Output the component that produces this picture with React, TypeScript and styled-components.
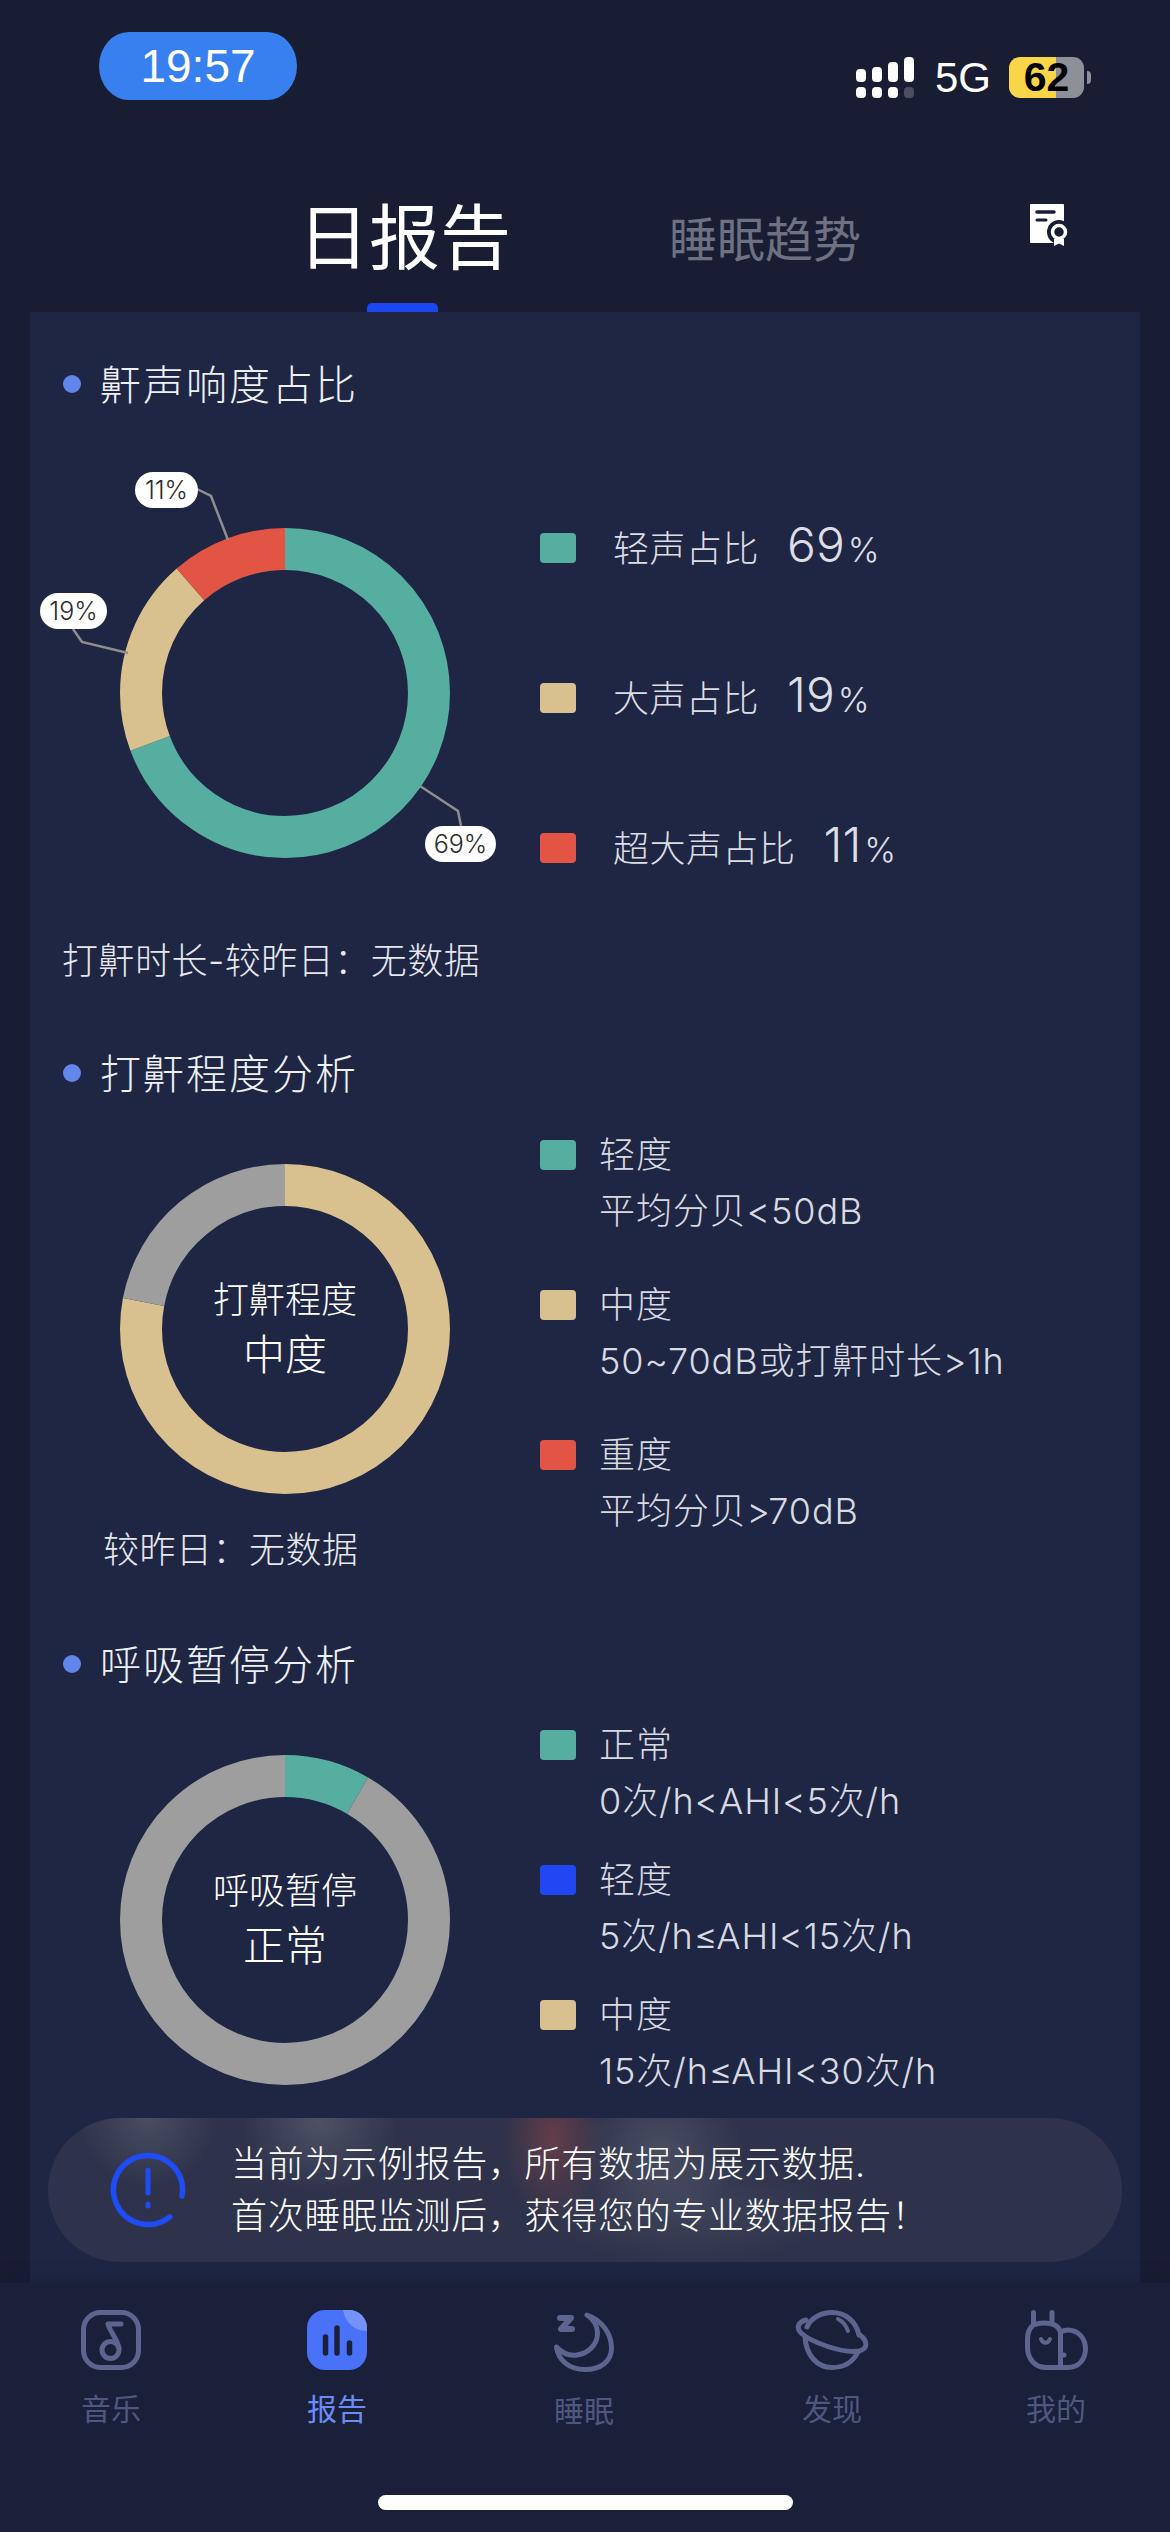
import React from 'react';
import styled, { createGlobalStyle } from 'styled-components';

const TEAL = '#55aea0';
const TAN = '#d8c18f';
const RED = '#e25544';
const GRAY = '#9e9e9e';
const BLUE = '#2147f5';

const GlobalStyle = createGlobalStyle`
  html, body {
    margin: 0;
    padding: 0;
    background: #191d33;
  }
  * {
    box-sizing: border-box;
  }
`;

const Page = styled.div`
  position: relative;
  width: 1170px;
  height: 2532px;
  overflow: hidden;
  display: flex;
  flex-direction: column;
  background: #191d33;
  font-family: Inter, "Noto Sans CJK SC", sans-serif;
  font-weight: 300;
  color: #eef0f5;
`;

const StatusBar = styled.div`
  height: 130px;
  flex: none;
  display: flex;
  justify-content: space-between;
  align-items: flex-start;
  padding: 32px 86px 0 99px;
`;

const TimePill = styled.div`
  width: 198px;
  height: 68px;
  border-radius: 30px / 34px;
  background: #3880ef;
  color: #fff;
  font-family: "Liberation Sans", sans-serif;
  font-weight: 400;
  font-size: 46px;
  line-height: 68px;
  text-align: center;
`;

const StatusRight = styled.div`
  display: flex;
  align-items: center;
  margin-top: 25px;
  height: 41px;
`;

const Signal = styled.div`
  display: flex;
  gap: 6px;
  margin-right: 21px;
`;

const SignalColumn = styled.div`
  width: 10px;
  height: 41px;
  display: flex;
  flex-direction: column;
  justify-content: flex-end;
  gap: 5px;
`;

const SignalDot = styled.div<{ $h: number; $dim?: boolean }>`
  height: ${(p) => p.$h}px;
  border-radius: 4px;
  background: ${(p) => (p.$dim ? '#4a4f60' : '#fff')};
`;

const Network = styled.div`
  font-family: "Liberation Sans", sans-serif;
  font-weight: 400;
  font-size: 42px;
  line-height: 41px;
  color: #fff;
  margin-right: 18px;
`;

const Battery = styled.div`
  position: relative;
  width: 75px;
  height: 41px;
  border-radius: 11px;
  background: linear-gradient(90deg, #f8d648 0 63%, #8e9099 63% 100%);
  color: #000;
  font-family: "Liberation Sans", sans-serif;
  font-weight: 700;
  font-size: 41px;
  line-height: 41px;
  text-align: center;

  &::after {
    content: '';
    position: absolute;
    left: 78px;
    top: 14px;
    width: 4px;
    height: 13px;
    border-radius: 0 6px 6px 0;
    background: #8e9099;
  }
`;

const Header = styled.div`
  height: 182px;
  flex: none;
  display: flex;
  align-items: flex-start;
  padding: 62px 100px 0 298px;
  font-family: "Noto Sans CJK SC", sans-serif;
`;

const ActiveTab = styled.div`
  position: relative;
  width: 213px;
  font-size: 71px;
  line-height: 80px;
  color: #fff;
  font-weight: 400;

  &::after {
    content: '';
    position: absolute;
    left: 69px;
    top: 111px;
    width: 71px;
    height: 9px;
    border-radius: 5px 5px 0 0;
    background: #1c47f0;
  }
`;

const IdleTab = styled.div`
  margin-left: 158px;
  margin-top: 4px;
  font-size: 48px;
  line-height: 80px;
  color: #6e7182;
  font-weight: 400;
`;

const ReportIcon = styled.svg`
  margin-left: auto;
  margin-top: 12px;
`;

const Panel = styled.div`
  flex: 1;
  margin: 0 30px;
  padding: 42px 0 0 32px;
  background: #1f2644;
  overflow: hidden;
`;

const SectionTitle = styled.div<{ $top?: number }>`
  display: flex;
  align-items: center;
  height: 60px;
  margin-top: ${(p) => p.$top ?? 0}px;
  font-size: 41px;
  letter-spacing: 2px;
  color: #eef0f5;

  &::before {
    content: '';
    width: 18px;
    height: 18px;
    border-radius: 50%;
    background: #6286ea;
    margin-left: 1px;
    margin-right: 19px;
  }
`;

const TitleText = styled.span`
  position: relative;
  top: -2px;
`;

const ChartRow = styled.div<{ $top: number }>`
  display: flex;
  align-items: flex-start;
  gap: 90px;
  margin-top: ${(p) => p.$top}px;
  margin-left: 58px;
`;

const ChartColumn = styled.div<{ $top: number }>`
  width: 330px;
  flex: none;
  padding-top: ${(p) => p.$top}px;
`;

const ChartBox = styled.div`
  position: relative;
  width: 330px;
  height: 330px;

  svg {
    display: block;
    overflow: visible;
  }
`;

const ChartCenter = styled.div`
  position: absolute;
  inset: 0;
  display: flex;
  flex-direction: column;
  align-items: center;
  justify-content: center;
  padding-top: 4px;
  color: #fff;
`;

const CenterLabel = styled.div`
  font-size: 36px;
  line-height: 48px;
`;

const CenterValue = styled.div`
  font-size: 42px;
  line-height: 62px;
`;

const Pill = styled.div<{ $left: number; $top: number; $width: number }>`
  position: absolute;
  left: ${(p) => p.$left}px;
  top: ${(p) => p.$top}px;
  width: ${(p) => p.$width}px;
  height: 36px;
  border-radius: 18px;
  background: #fff;
  color: #2c2c2c;
  font-size: 25px;
  line-height: 36px;
  text-align: center;
`;

const Caption = styled.div<{ $left?: number; $top?: number }>`
  margin-left: ${(p) => p.$left ?? 0}px;
  margin-top: ${(p) => p.$top ?? 0}px;
  font-size: 36px;
  line-height: 50px;
  letter-spacing: 0.5px;
  white-space: nowrap;
  color: #e6e8ee;
`;

const Legend = styled.div<{ $gap: number }>`
  display: flex;
  flex-direction: column;
  gap: ${(p) => p.$gap}px;
`;

const ShareRow = styled.div`
  display: flex;
  align-items: center;
  height: 50px;
`;

const Swatch = styled.div<{ $color: string }>`
  width: 36px;
  height: 30px;
  flex: none;
  border-radius: 4px;
  background: ${(p) => p.$color};
`;

const ShareLabel = styled.div`
  margin-left: 37px;
  margin-right: 28px;
  margin-bottom: 4px;
  font-size: 36px;
  letter-spacing: 0.5px;
  color: #dcdde5;
`;

const ShareValue = styled.div`
  margin-bottom: 8px;
  font-size: 48px;
  color: #dcdde5;

  small {
    margin-left: 3px;
    font-size: 34px;
  }
`;

const LegendItem = styled.div`
  display: grid;
  grid-template-columns: 36px 1fr;
  column-gap: 23px;
  row-gap: 6px;
  align-items: center;
  font-size: 36px;
  line-height: 50px;
  letter-spacing: 0.9px;
  color: #d8dae2;
  white-space: nowrap;
`;

const LegendNote = styled.div`
  grid-column: 2;
`;

const Banner = styled.div`
  position: absolute;
  left: 48px;
  top: 2118px;
  width: 1074px;
  height: 144px;
  border-radius: 72px;
  display: flex;
  align-items: center;
  padding-left: 60px;
  background:
    radial-gradient(70px 70px at 100px 0, rgba(255, 255, 255, 0.13), transparent),
    radial-gradient(80px 72px at 272px 4px, rgba(255, 255, 255, 0.15), transparent),
    radial-gradient(50px 85px at 505px 20px, rgba(226, 85, 68, 0.3), transparent),
    radial-gradient(85px 72px at 612px 30px, rgba(255, 255, 255, 0.13), transparent),
    radial-gradient(150px 55px at 640px 92px, rgba(255, 255, 255, 0.08), transparent),
    #2e334b;
`;

const BannerText = styled.div`
  margin-left: 43px;
  font-size: 36px;
  line-height: 52px;
  letter-spacing: 0.7px;
  color: #fff;
`;

const TabBar = styled.div`
  position: relative;
  height: 249px;
  flex: none;
  display: flex;
  flex-direction: column;
  background: #1a2039;
  box-shadow: 0 -6px 14px rgba(20, 24, 46, 0.35);
`;

const TabRow = styled.div`
  display: grid;
  grid-template-columns: 222px 230px 264px 232px 216px;
  padding-top: 27px;
`;

const TabItem = styled.div<{ $active?: boolean; $drop?: number }>`
  display: flex;
  flex-direction: column;
  align-items: center;
  padding-top: ${(p) => p.$drop ?? 0}px;
  font-family: "Noto Sans CJK SC", sans-serif;
  font-weight: 400;
  font-size: 30px;
  line-height: 40px;
  color: ${(p) => (p.$active ? '#6b8cf5' : '#4f5780')};

  svg {
    display: block;
    height: 60px;
    margin-bottom: 17px;
  }
`;

const HomeIndicator = styled.div`
  width: 415px;
  height: 15px;
  margin: 66px auto 0;
  border-radius: 8px;
  background: #fff;
`;

type Segment = { value: number; color: string };

const Donut = ({ segments }: { segments: Segment[] }) => {
  let offset = 0;
  return (
    <g transform="rotate(-90 165 165)">
      {segments.map((s) => {
        const circle = (
          <circle
            key={s.color}
            cx="165"
            cy="165"
            r="144"
            fill="none"
            stroke={s.color}
            strokeWidth="42"
            pathLength={100}
            strokeDasharray={`${s.value} ${100 - s.value}`}
            strokeDashoffset={-offset}
          />
        );
        offset += s.value;
        return circle;
      })}
    </g>
  );
};

const Leaders = () => (
  <g fill="none" stroke="#8e8e8e" strokeWidth="2.5">
    <polyline points="77,-39 91,-32 108,12" />
    <polyline points="-47,101 -38,114 8,125" />
    <polyline points="300,258 338,283 341,298" />
  </g>
);

const MusicIcon = () => (
  <svg width="60" viewBox="0 0 60 60" fill="none" stroke="#5c648f" strokeWidth="5" strokeLinecap="round" strokeLinejoin="round">
    <rect x="2.5" y="2.5" width="55" height="55" rx="17" />
    <circle cx="29.5" cy="40" r="8.5" />
    <path d="M27 14H40M27 14C29 22 36 28 38 38" />
  </svg>
);

const ChartIcon = () => (
  <svg width="60" viewBox="0 0 60 60">
    <rect width="60" height="60" rx="18" fill="#4a72f9" />
    <path d="M36 0H42C52 0 60 8 60 18V21C47 21 38 12 36 0Z" fill="#7393fb" />
    <g stroke="#1a2039" strokeWidth="5.5" strokeLinecap="round">
      <path d="M18.5 27V43" />
      <path d="M30 18V43" />
      <path d="M42.5 33V43" />
    </g>
  </svg>
);

const MoonIcon = () => (
  <svg width="60" viewBox="0 0 60 60" fill="none" stroke="#5c648f" strokeWidth="5" strokeLinejoin="round">
    <path d="M33 3C48 8 57.5 22 57.5 36C57.5 50 46 57.5 31 57.5C15 57.5 4 48 2.5 35C8 41 15 44 23 43C35 41.5 43.5 32 43.5 21C43.5 13 39 7 33 3Z" />
    <path d="M6 6H17L7 17H18" strokeWidth="6" strokeLinecap="round" />
  </svg>
);

const PlanetIcon = () => (
  <svg width="74" viewBox="0 0 74 60" fill="none" stroke="#5c648f" strokeWidth="5" strokeLinecap="round">
    <path d="M12 17C16 8 26 2.5 37 2.5C50 2.5 61 11 64 25" />
    <path d="M10 27C11 45 22 57.5 37 57.5C49 57.5 58 52 63 42" />
    <path d="M11 10C3 12 1 18 6 23C16 32 48 44 64 41C73 39 73 31 65 25" />
    <path d="M43 9C47 11 51 15 53 21" strokeWidth="4" />
  </svg>
);

const MineIcon = () => (
  <svg width="63" viewBox="0 0 63 60" fill="none" stroke="#5c648f" strokeWidth="5" strokeLinecap="round" strokeLinejoin="round">
    <path d="M8.5 2.5V15C4.5 18 2.5 23 2.5 29V37C2.5 49 10 57.5 21 57.5H43C53 57.5 60.5 50 60.5 39C60.5 28 53 20 43 20C40 20 37.5 21 35.5 22C34 18 31 15 27 14V2.5M8.5 15C14 12.5 21 12.5 27 14" />
    <path d="M35.5 22V57" />
    <path d="M16 29C18 34 23 34 25 29" strokeWidth="4" />
    <path d="M36 45H39" strokeWidth="5" />
  </svg>
);

const App: React.FC = () => {
  return (
    <>
      <GlobalStyle />
      <Page>
        <StatusBar>
          <TimePill>19:57</TimePill>
          <StatusRight>
            <Signal>
              <SignalColumn>
                <SignalDot $h={13} />
                <SignalDot $h={11} />
              </SignalColumn>
              <SignalColumn>
                <SignalDot $h={15} />
                <SignalDot $h={11} />
              </SignalColumn>
              <SignalColumn>
                <SignalDot $h={20} />
                <SignalDot $h={11} />
              </SignalColumn>
              <SignalColumn>
                <SignalDot $h={25} />
                <SignalDot $h={11} $dim />
              </SignalColumn>
            </Signal>
            <Network>5G</Network>
            <Battery>62</Battery>
          </StatusRight>
        </StatusBar>

        <Header>
          <ActiveTab>日报告</ActiveTab>
          <IdleTab>睡眠趋势</IdleTab>
          <ReportIcon width="40" height="42" viewBox="0 0 40 42">
            <rect width="34" height="39" rx="1" fill="#fff" />
            <circle cx="29" cy="28" r="12" fill="#191d33" />
            <path d="M7 8H24" stroke="#191d33" strokeWidth="3.5" strokeLinecap="round" />
            <path d="M7 16H16" stroke="#191d33" strokeWidth="3" strokeLinecap="round" />
            <circle cx="29" cy="28" r="6.5" fill="none" stroke="#fff" strokeWidth="3.5" />
            <path d="M24 35L24 42L29 39.5L34 42L34 35Z" fill="#fff" />
          </ReportIcon>
        </Header>

        <Panel>
          <SectionTitle><TitleText>鼾声响度占比</TitleText></SectionTitle>
          <ChartRow $top={109}>
            <ChartColumn $top={5}>
              <ChartBox>
                <svg width="330" height="330" viewBox="0 0 330 330">
                  <Donut
                    segments={[
                      { value: 69.3, color: TEAL },
                      { value: 19.3, color: TAN },
                      { value: 11.4, color: RED },
                    ]}
                  />
                  <Leaders />
                </svg>
                <Pill $left={15} $top={-56} $width={63}>11%</Pill>
                <Pill $left={-80} $top={65} $width={67}>19%</Pill>
                <Pill $left={305} $top={298} $width={71}>69%</Pill>
              </ChartBox>
            </ChartColumn>
            <Legend $gap={100}>
              <ShareRow>
                <Swatch $color={TEAL} />
                <ShareLabel>轻声占比</ShareLabel>
                <ShareValue>69<small>%</small></ShareValue>
              </ShareRow>
              <ShareRow>
                <Swatch $color={TAN} />
                <ShareLabel>大声占比</ShareLabel>
                <ShareValue>19<small>%</small></ShareValue>
              </ShareRow>
              <ShareRow>
                <Swatch $color={RED} />
                <ShareLabel>超大声占比</ShareLabel>
                <ShareValue>11<small>%</small></ShareValue>
              </ShareRow>
            </Legend>
          </ChartRow>
          <Caption $top={63}>打鼾时长-较昨日：无数据</Caption>

          <SectionTitle $top={57}><TitleText>打鼾程度分析</TitleText></SectionTitle>
          <ChartRow $top={27}>
            <ChartColumn $top={34}>
              <ChartBox>
                <svg width="330" height="330" viewBox="0 0 330 330">
                  <Donut
                    segments={[
                      { value: 78, color: TAN },
                      { value: 22, color: GRAY },
                    ]}
                  />
                </svg>
                <ChartCenter>
                  <CenterLabel>打鼾程度</CenterLabel>
                  <CenterValue>中度</CenterValue>
                </ChartCenter>
              </ChartBox>
              <Caption $left={-17} $top={31}>较昨日：无数据</Caption>
            </ChartColumn>
            <Legend $gap={44}>
              <LegendItem>
                <Swatch $color={TEAL} />
                <div>轻度</div>
                <LegendNote>平均分贝&lt;50dB</LegendNote>
              </LegendItem>
              <LegendItem>
                <Swatch $color={TAN} />
                <div>中度</div>
                <LegendNote>50~70dB或打鼾时长&gt;1h</LegendNote>
              </LegendItem>
              <LegendItem>
                <Swatch $color={RED} />
                <div>重度</div>
                <LegendNote>平均分贝&gt;70dB</LegendNote>
              </LegendItem>
            </Legend>
          </ChartRow>

          <SectionTitle $top={59}><TitleText>呼吸暂停分析</TitleText></SectionTitle>
          <ChartRow $top={26}>
            <ChartColumn $top={35}>
              <ChartBox>
                <svg width="330" height="330" viewBox="0 0 330 330">
                  <Donut
                    segments={[
                      { value: 8.4, color: TEAL },
                      { value: 91.6, color: GRAY },
                    ]}
                  />
                </svg>
                <ChartCenter>
                  <CenterLabel>呼吸暂停</CenterLabel>
                  <CenterValue>正常</CenterValue>
                </ChartCenter>
              </ChartBox>
            </ChartColumn>
            <Legend $gap={29}>
              <LegendItem>
                <Swatch $color={TEAL} />
                <div>正常</div>
                <LegendNote>0次/h&lt;AHI&lt;5次/h</LegendNote>
              </LegendItem>
              <LegendItem>
                <Swatch $color={BLUE} />
                <div>轻度</div>
                <LegendNote>5次/h≤AHI&lt;15次/h</LegendNote>
              </LegendItem>
              <LegendItem>
                <Swatch $color={TAN} />
                <div>中度</div>
                <LegendNote>15次/h≤AHI&lt;30次/h</LegendNote>
              </LegendItem>
            </Legend>
          </ChartRow>
        </Panel>

        <TabBar>
          <TabRow>
            <TabItem>
              <MusicIcon />
              音乐
            </TabItem>
            <TabItem $active>
              <ChartIcon />
              报告
            </TabItem>
            <TabItem $drop={2}>
              <MoonIcon />
              睡眠
            </TabItem>
            <TabItem>
              <PlanetIcon />
              发现
            </TabItem>
            <TabItem>
              <MineIcon />
              我的
            </TabItem>
          </TabRow>
          <HomeIndicator />
        </TabBar>

        <Banner>
          <svg width="80" height="80" viewBox="0 0 80 80" fill="none" stroke="#1e4cf5" strokeLinecap="round">
            <path d="M61.7 66.8A34.5 34.5 0 1 1 74 46" strokeWidth="5.5" />
            <path d="M40 20V43" strokeWidth="5" />
            <path d="M40 54V56" strokeWidth="5" />
          </svg>
          <BannerText>
            当前为示例报告，所有数据为展示数据.
            <br />
            首次睡眠监测后，获得您的专业数据报告！
          </BannerText>
        </Banner>
      </Page>
    </>
  );
};

export default App;
